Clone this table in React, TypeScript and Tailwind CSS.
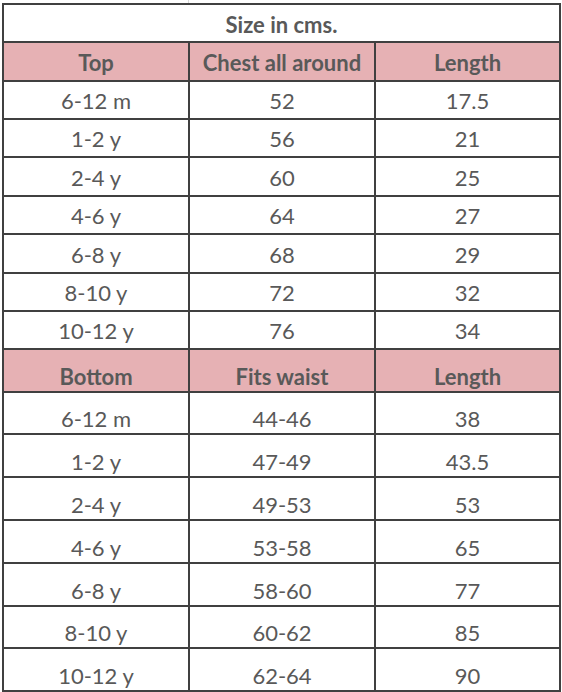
import React from 'react';

const topRows = [
  ['6-12 m', '52', '17.5'],
  ['1-2 y', '56', '21'],
  ['2-4 y', '60', '25'],
  ['4-6 y', '64', '27'],
  ['6-8 y', '68', '29'],
  ['8-10 y', '72', '32'],
  ['10-12 y', '76', '34'],
];

const bottomRows = [
  ['6-12 m', '44-46', '38'],
  ['1-2 y', '47-49', '43.5'],
  ['2-4 y', '49-53', '53'],
  ['4-6 y', '53-58', '65'],
  ['6-8 y', '58-60', '77'],
  ['8-10 y', '60-62', '85'],
  ['10-12 y', '62-64', '90'],
];

function Cell({ children, head, tall }: { children: React.ReactNode; head?: boolean; tall?: boolean }) {
  return (
    <div
      className={`flex items-end justify-center leading-none ${head ? 'bg-[#e6b1b4] font-bold' : 'bg-white'} ${tall ? 'pb-[3px]' : 'pb-[6px]'}`}
    >
      {children}
    </div>
  );
}

export default function App() {
  return (
    <div className="w-[562px] h-[692px] bg-white text-[22px] text-[#595959]" style={{ fontFamily: 'Lato, "Open Sans", sans-serif' }}>
      {/* sheet gridline above the table */}
      <div className="flex h-[3px]">
        <div className="w-[188px]" />
        <div className="w-px bg-[#d9d9d9]" />
      </div>

      <div className="ml-[2px] w-[559px] grid grid-cols-[184px_184px_183px] grid-rows-[36px_37px_36px_36px_37px_36px_37px_36px_36px_41px_40px_41px_41px_41px_41px_40px_41px] gap-[2px] p-[2px] bg-[#404040]">
        <div className="col-span-3 flex items-end justify-center bg-white pb-[5px] leading-none font-bold">
          Size in cms.
        </div>

        <Cell head>Top</Cell>
        <Cell head>Chest all around</Cell>
        <Cell head>Length</Cell>
        {topRows.map((r) => (
          <React.Fragment key={'t' + r[0]}>
            <Cell>{r[0]}</Cell>
            <Cell>{r[1]}</Cell>
            <Cell>{r[2]}</Cell>
          </React.Fragment>
        ))}

        <Cell head tall>Bottom</Cell>
        <Cell head tall>Fits waist</Cell>
        <Cell head tall>Length</Cell>
        {bottomRows.map((r) => (
          <React.Fragment key={'b' + r[0]}>
            <Cell tall>{r[0]}</Cell>
            <Cell tall>{r[1]}</Cell>
            <Cell tall>{r[2]}</Cell>
          </React.Fragment>
        ))}
      </div>
    </div>
  );
}
